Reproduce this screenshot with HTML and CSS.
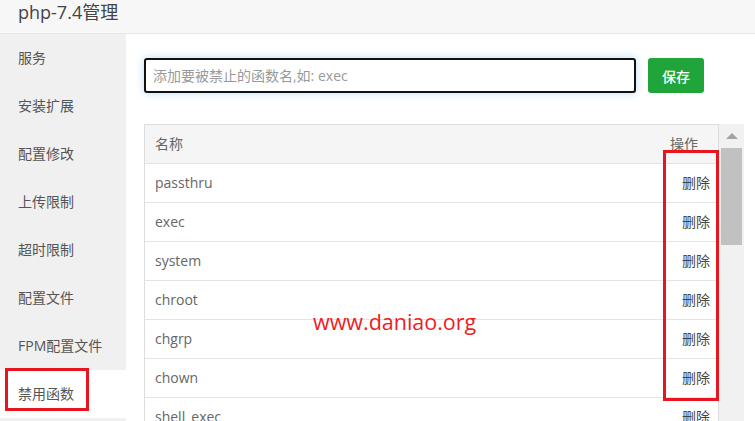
FILE: index.html
```html
<!DOCTYPE html>
<html lang="zh">
<head>
<meta charset="utf-8">
<title>php-7.4管理</title>
<link rel="stylesheet" href="styles.css">
</head>
<body>
<div class="app">
  <header class="topbar">php-7.4管理</header>
  <div class="body">
    <nav class="side">
      <div class="side-item">服务</div>
      <div class="side-item">安装扩展</div>
      <div class="side-item">配置修改</div>
      <div class="side-item">上传限制</div>
      <div class="side-item">超时限制</div>
      <div class="side-item">配置文件</div>
      <div class="side-item">FPM配置文件</div>
      <div class="side-item active">禁用函数<span class="mark mark-side"></span></div>
    </nav>
    <main class="main">
      <div class="add-row">
        <input class="fn-input" type="text" placeholder="添加要被禁止的函数名,如: exec">
        <button class="btn-save">保存</button>
      </div>
      <div class="list-wrap">
        <div class="list">
          <div class="row head"><span class="name">名称</span><span class="op">操作</span></div>
          <div class="row"><span class="name">passthru</span><span class="op">删除</span></div>
          <div class="row"><span class="name">exec</span><span class="op">删除</span></div>
          <div class="row"><span class="name">system</span><span class="op">删除</span></div>
          <div class="row"><span class="name">chroot</span><span class="op">删除</span></div>
          <div class="row"><span class="name">chgrp</span><span class="op">删除</span></div>
          <div class="row"><span class="name">chown</span><span class="op">删除</span></div>
          <div class="row"><span class="name">shell_exec</span><span class="op">删除</span></div>
        </div>
        <div class="scrollbar">
          <div class="sb-up"></div>
          <div class="sb-thumb"></div>
        </div>
        <span class="mark mark-ops"></span>
        <span class="watermark">www.daniao.org</span>
      </div>
    </main>
  </div>
</div>
</body>
</html>
```
FILE: styles.css
```css
* { box-sizing: border-box; }
html, body { margin: 0; padding: 0; }
body {
  width: 755px;
  height: 421px;
  overflow: hidden;
  background: #fff;
  font-family: "Open Sans", "Noto Sans CJK SC", sans-serif;
  font-size: 14px;
  color: #555;
}
.app { display: flex; flex-direction: column; height: 421px; }
.topbar {
  height: 34px;
  flex: none;
  background: #f7f7f7;
  border-bottom: 1px solid #e6e6e6;
  padding: 0 0 0 18px;
  font-size: 18px;
  line-height: 24px;
  color: #444;
}
.body { display: flex; flex: 1; min-height: 0; }
.side {
  width: 126px;
  flex: none;
  background: #f0f0f0;
  overflow: hidden;
}
.side-item {
  position: relative;
  height: 48px;
  line-height: 48px;
  padding-left: 18px;
  color: #555;
  font-size: 14px;
  white-space: nowrap;
}
.side-item.active { background: #fff; }
.mark {
  position: absolute;
  border: 3px solid #e8141e;
  pointer-events: none;
}
.mark-side { left: 5px; top: -2px; width: 84px; height: 43px; }
.main {
  flex: 1;
  padding: 24px 0 0 18px;
  overflow: hidden;
}
.add-row { display: flex; align-items: center; gap: 12px; }
.fn-input {
  width: 492px;
  height: 35px;
  border: 2px solid #111;
  border-radius: 3px;
  padding: 0 7px;
  font-family: "Open Sans", "Noto Sans CJK SC", sans-serif;
  font-size: 14px;
  color: #333;
  outline: none;
  box-shadow: 0 0 8px rgba(102, 175, 233, 0.45);
}
.fn-input::placeholder { color: #999; }
.btn-save {
  width: 56px;
  height: 35px;
  border: none;
  border-radius: 3px;
  background: #20a53a;
  color: #fff;
  font-family: "Noto Sans CJK SC", sans-serif;
  font-size: 14px;
  font-weight: 500;
  padding: 0;
}
.list-wrap {
  position: relative;
  display: flex;
  margin-top: 31px;
  height: 300px;
}
.list {
  width: 575px;
  border-left: 1px solid #ddd;
  border-right: 1px solid #ddd;
  border-top: 1px solid #ddd;
  overflow: hidden;
}
.row {
  display: flex;
  justify-content: space-between;
  height: 39px;
  line-height: 38px;
  border-bottom: 1px solid #e4e4e4;
  padding: 0 8px 0 10px;
  color: #666;
  font-size: 14px;
}
.row.head {
  background: #f5f5f5;
  padding-right: 20px;
  color: #666;
}
.op { color: #444; font-size: 14px; }
.row.head .op { color: #666; font-size: 14px; }
.scrollbar {
  width: 25px;
  background: #f1f1f1;
  display: flex;
  flex-direction: column;
  align-items: center;
}
.sb-up {
  margin-top: 9px;
  width: 0;
  height: 0;
  border-left: 6px solid transparent;
  border-right: 6px solid transparent;
  border-bottom: 6px solid #a3a3a3;
}
.sb-thumb {
  margin-top: 9px;
  width: 21px;
  height: 97px;
  background: #c1c1c1;
}
.mark-ops { left: 519px; top: 26px; width: 56px; height: 251px; }
.watermark {
  position: absolute;
  left: 169px;
  top: 183px;
  font-family: "Open Sans", sans-serif;
  font-size: 21.5px;
  line-height: 30px;
  color: #ee1c25;
  pointer-events: none;
}
```
